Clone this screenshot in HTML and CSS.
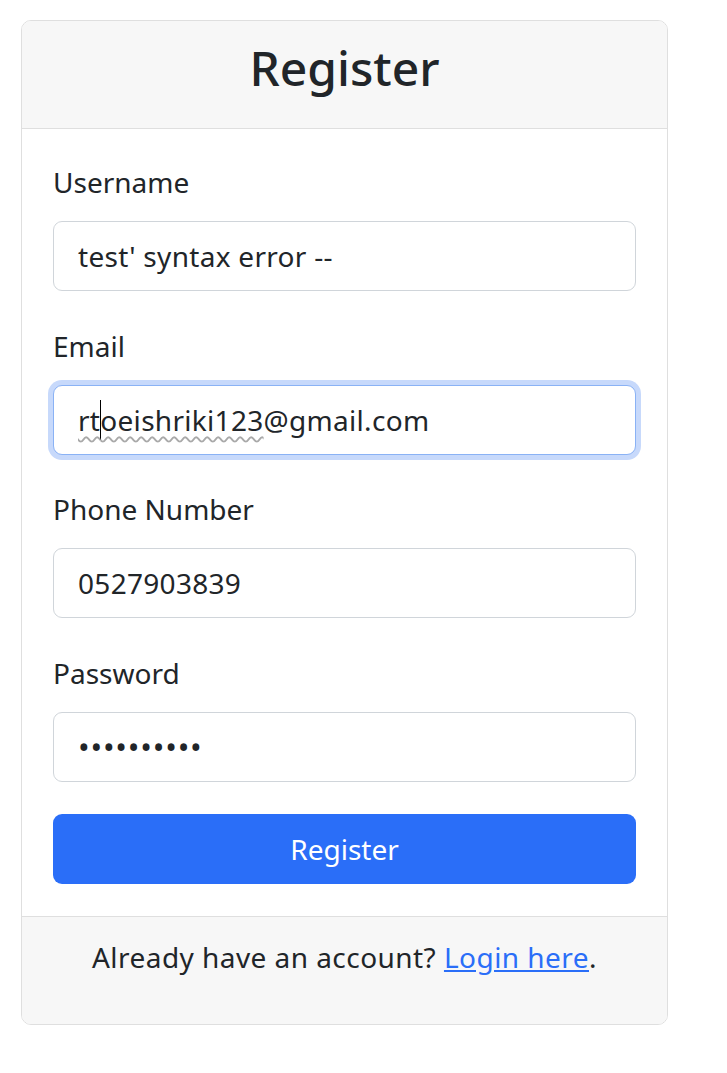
FILE: index.html
```html
<!DOCTYPE html>
<html lang="en">
<head>
<meta charset="utf-8">
<title>Register</title>
<link rel="stylesheet" href="styles.css">
</head>
<body>
<div class="card">
  <div class="card-header">
    <h3 class="title">Register</h3>
  </div>
  <div class="card-body">
    <div class="field">
      <label class="label">Username</label>
      <div class="control"><span class="value">test' syntax error --</span></div>
    </div>
    <div class="field">
      <label class="label">Email</label>
      <div class="control focused"><span class="value"><span class="misspelled">rt<span class="caret"></span>oeishriki123</span>@gmail.com</span></div>
    </div>
    <div class="field">
      <label class="label">Phone Number</label>
      <div class="control"><span class="value">0527903839</span></div>
    </div>
    <div class="field">
      <label class="label">Password</label>
      <div class="control"><span class="value dots">••••••••••</span></div>
    </div>
    <button class="btn" type="button">Register</button>
  </div>
  <div class="card-footer">
    <p class="footer-text">Already have an account? <a class="link" href="#">Login here</a>.</p>
  </div>
</div>
</body>
</html>
```
FILE: styles.css
```css
* { box-sizing: border-box; }
body {
  margin: 0;
  background: #ffffff;
  color: #212529;
  font-family: "Noto Sans", "Open Sans", sans-serif;
  font-size: 28px;
}
.card {
  margin: 20px 0 0 21px;
  width: 647px;
  border: 1px solid #dfdfdf;
  border-radius: 10px;
  overflow: hidden;
  background: #fff;
}
.card-header {
  background: #f7f7f7;
  border-bottom: 1px solid #dfdfdf;
  padding: 15px 0 28px;
  text-align: center;
}
.title {
  margin: 0;
  font-size: 48px;
  font-weight: 500;
  line-height: 64px;
}
.card-body {
  padding: 32px 31px 32px;
}
.field {
  display: flex;
  flex-direction: column;
  margin-bottom: 33.6px;
}
.field:last-of-type { margin-bottom: 32px; }
.label {
  line-height: 42px;
  margin-bottom: 18px;
}
.control {
  height: 70px;
  border: 1px solid #d0d5da;
  border-radius: 9px;
  padding: 0 24px;
  display: flex;
  align-items: center;
  line-height: 42px;
  background: #fff;
  letter-spacing: 0.3px;
}
.control.focused {
  border-color: #8ab2f5;
  box-shadow: 0 0 0 5px #c7d9fb;
}
.misspelled {
  text-decoration: underline wavy #a9a9a9;
  text-decoration-thickness: 1.5px;
  text-underline-offset: 5px;
}
.caret {
  display: inline-block;
  width: 0;
  height: 40px;
  border-left: 1px solid #000;
  vertical-align: -9px;
  margin-right: -1px;
}
.dots {
  font-size: 31px;
  letter-spacing: 0.8px;
}
.btn {
  display: block;
  width: 100%;
  height: 70px;
  border: 0;
  border-radius: 9px;
  background: #2a6ef8;
  color: #fff;
  font-family: inherit;
  font-size: 28px;
  line-height: 42px;
  padding: 0;
}
.card-footer {
  background: #f7f7f7;
  border-top: 1px solid #dfdfdf;
  padding: 19px 0 46px;
  text-align: center;
}
.footer-text {
  margin: 0;
  line-height: 42px;
  letter-spacing: 0.45px;
}
.link {
  color: #2a6ef8;
  text-decoration: underline;
}
```
